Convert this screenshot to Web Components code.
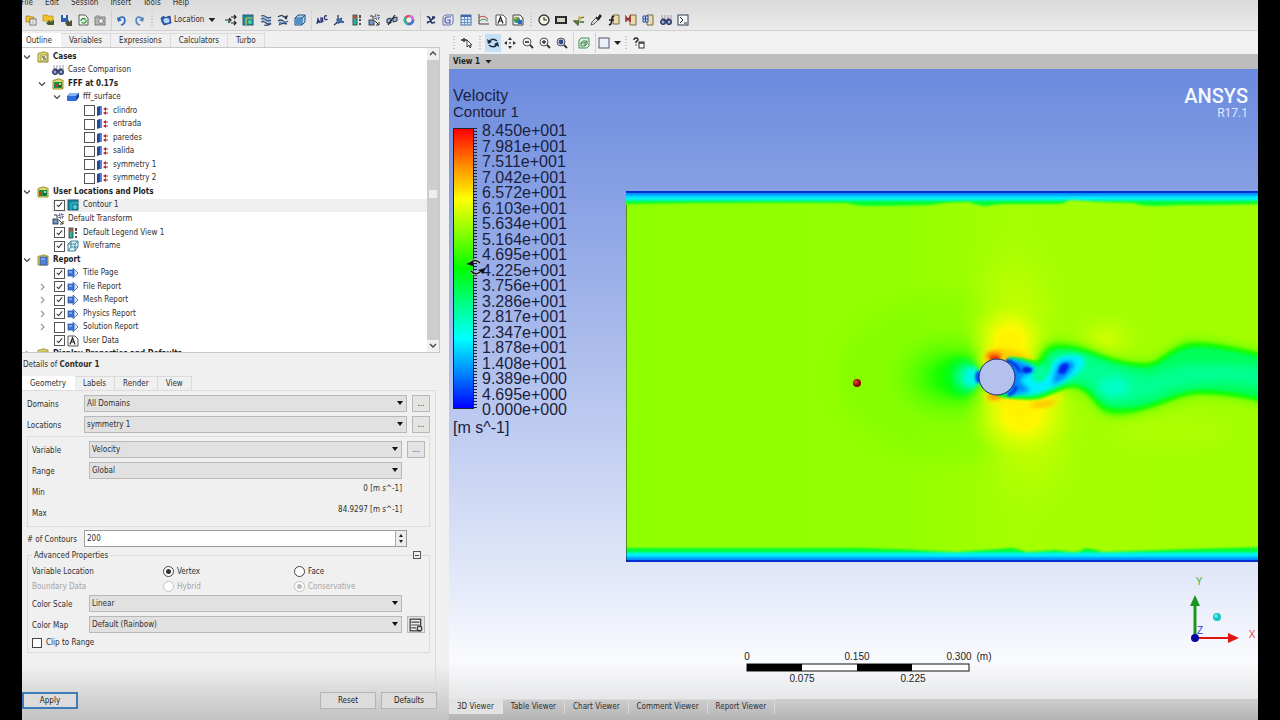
<!DOCTYPE html>
<html lang="en">
<head>
<meta charset="utf-8">
<title>CFD-Post</title>
<style>
  html, body { margin: 0; height: 100%; background: #000; }
  body {
    box-sizing: border-box; padding: 0 22px; overflow: hidden;
    font: 8px/12px "DejaVu Sans Condensed", "DejaVu Sans", sans-serif; color: #2e2e2e;
  }
</style>
</head>
<body>
<post-app></post-app>
<script>
const ICONS = {
  open: '<path d="M1 2h4l1 1h3v5H1z" fill="#f2c32c" stroke="#9a7a14" stroke-width=".7"/><rect x="5" y="5" width="6" height="6" fill="#fff" stroke="#555" stroke-width=".8"/><path d="M6.500 7h3M6.500 9h3" stroke="#777" stroke-width=".7"/>',
  openState: '<path d="M1 1h4l1 1h5v5H1z" fill="#f2c32c" stroke="#b08c18" stroke-width=".7"/><path d="M4 9l4-3v2l4-2v5H6z" fill="#4b5a2c"/>',
  save: '<rect x="1" y="1" width="7" height="7" fill="#2c5cb4"/><rect x="3" y="1" width="3" height="3" fill="#e4edf8"/><path d="M5 9l4-3v2l3-2v6H7z" fill="#4a5632"/>',
  reload: '<path d="M2 1h6l3 3v7H2z" fill="#eef6ee" stroke="#4c4c4c" stroke-width=".9"/><path d="M4 7a2.500 2.500 0 0 1 4.500-1.500M9 6a2.500 2.500 0 0 1-4.500 2" fill="none" stroke="#2e9a3a" stroke-width="1.300"/>',
  camera: '<rect x="1" y="3" width="10" height="8" fill="#b8b8b8" stroke="#6a6a6a" stroke-width=".8"/><path d="M2 2h4" stroke="#888"/><circle cx="7" cy="7" r="2.500" fill="#ececec" stroke="#666" stroke-width=".8"/>',
  undo: '<path d="M5 11c5-1 5-8 1-8-2 0-3 1-4 3" fill="none" stroke="#2f6bb8" stroke-width="1.700"/><path d="M1 3l1 5 4-2z" fill="#2f6bb8"/>',
  redo: '<path d="M7 11c-5-1-5-8-1-8 2 0 3 1 4 3" fill="none" stroke="#4f86c4" stroke-width="1.700"/><path d="M11 3l-1 5-4-2z" fill="#4f86c4"/>',
  location: '<path d="M1 4l3-2v2l6-2 1 7-7 2-2-3z" fill="#2f62c0" stroke="#183a80" stroke-width=".8"/><ellipse cx="6.500" cy="6.500" rx="3" ry="2.500" fill="#b4d2fa"/>',
  vector: '<path d="M0 6h6M4 4l2 2-2 2M6 3h5M9 1l2 2-2 2M6 9h5M9 7l2 2-2 2" fill="none" stroke="#222" stroke-width="1.200"/><circle cx="4" cy="8" r="1.200" fill="#258068"/>',
  contour: '<rect x="1" y="1" width="10" height="10" fill="#178f9c" stroke="#265870"/><path d="M4 11V6q0-2 2-2h5" fill="none" stroke="#e9bd3a" stroke-width="1.200"/><circle cx="8" cy="8" r="2" fill="#4cd0a8"/>',
  contourItem: '<rect x="1" y="1" width="10" height="10" fill="#1788a4" stroke="#1c5878"/><path d="M4 11V6q0-2 2-2h5" fill="none" stroke="#2cb4b4" stroke-width="1.400"/><circle cx="8" cy="8" r="2" fill="#5cd0d0"/>',
  stream: '<path d="M1 2q3-1 5 1t5 0M1 5q3-1 5 1t5 0M1 8q3-1 5 1t5 0M4 11q3 1 7-1" fill="none" stroke="#34496a" stroke-width="1.300"/><path d="M2 3.500q3-1 5 1t4 0M2 6.500q3-1 5 1t4 0" fill="none" stroke="#7ba6dc"/>',
  particle: '<path d="M1 3q4-3 6 0l4-1M1 7q3-2 5 0t5 0M2 11q3-3 8-1" fill="none" stroke="#3a4e6a" stroke-width="1.400"/><path d="M2 9q3-2 8-1" fill="none" stroke="#6c9ad8"/><circle cx="9" cy="4" r="1.200" fill="#222"/><circle cx="3" cy="9" r="1.200" fill="#4e8ad8"/>',
  volume: '<path d="M1 4l3-3h7v7l-3 3H1z" fill="#a9d6f4" stroke="#1e4e82"/><path d="M1 4h7v7M8 4l3-3" fill="none" stroke="#1e4e82"/><path d="M2 5h5v5H2z" fill="#4990cc"/>',
  abc: '<path d="M1 10l1-5 2 4M1.500 8h2M5 8V4q3 0 1 2 2 1 0 2zM11 2q-3-1-2.500 2t3 1" fill="none" stroke="#2d357c" stroke-width="1.300"/>',
  coord: '<path d="M5 1v7l-4 3M5 8h6M3 9l6-5" fill="none" stroke="#263a5e" stroke-width="1.300"/><path d="M3 5l5-1 2 4-5 2z" fill="#3f6ea8"/>',
  legend: '<rect x="2" y="1" width="4" height="10" fill="#28b4a0" stroke="#333" stroke-width=".8"/><rect x="2.500" y="1.500" width="3" height="3" fill="#d84830"/><path d="M9 1v3M9 5v2M9 9v2" stroke="#333" stroke-width="1.700"/>',
  transform: '<rect x="1" y="6" width="5" height="5" fill="#6b9ad6" stroke="#222" stroke-width=".8"/><path d="M2 2h3v3M7 7l4 4M11 8v3H8" fill="none" stroke="#333"/><path d="M7 1h4v4H7z" fill="#b9cbe8" stroke="#222" stroke-dasharray="1 1"/>',
  clip: '<path d="M1 9V5l4-1v5zM7 8V4l4-1v4z" fill="#8fb2e0" stroke="#334"/><path d="M2 11L9 1" stroke="#222" stroke-width="1.300"/>',
  color: '<circle cx="6" cy="6" r="4" fill="#f2f2f2" stroke="#e04848" stroke-width="2.600"/><path d="M6 2a4 4 0 0 1 4 4" stroke="#c878e0" stroke-width="2.600" fill="none"/><path d="M10 6a4 4 0 0 1-5 3.900" stroke="#3f78e0" stroke-width="2.600" fill="none"/><path d="M5 9.900A4 4 0 0 1 3 3.200" stroke="#28b89c" stroke-width="2.600" fill="none"/>',
  variable: '<path d="M2 3q2-1 3 2l1 3q1 2 4 0M10 3L2 9M7 3h3" fill="none" stroke="#26366a" stroke-width="1.700"/>',
  expression: '<path d="M3 1h8v8l-2 2H1V3z" fill="#e9ecf8" stroke="#6670a4"/><path d="M9 3H5q-2 0-2 3t2 3h3V6H5" fill="none" stroke="#4a4ea4" stroke-width="1.200"/>',
  table: '<rect x="1" y="1" width="10" height="10" fill="#dcebfa" stroke="#4c6c9c"/><path d="M1 2h10" stroke="#3868b0" stroke-width="2"/><path d="M1 5.500h10M1 8.500h10M4.500 3v8M7.500 3v8" stroke="#6b90c4"/>',
  chart: '<path d="M2 0v10h10" fill="none" stroke="#444"/><path d="M2 4q4-4 9 1" fill="none" stroke="#c84040"/><path d="M2 8q3-5 9-1" fill="none" stroke="#3a9a50"/>',
  comment: '<path d="M1 1h7l3 3v7H1z" fill="#fdfdfd" stroke="#555"/><path d="M3 9.500L5.500 3 8 9.500M4 7h3" fill="none" stroke="#222" stroke-width="1.200"/>',
  figure: '<path d="M1 1h7l3 3v7H1z" fill="#e8f0fa" stroke="#444"/><circle cx="5" cy="6" r="3" fill="#2f9a4a"/><path d="M6 6h4v4H6z" fill="#2c68c8"/><circle cx="4" cy="4" r="1.500" fill="#d89c30"/>',
  clock: '<circle cx="6" cy="6" r="5" fill="#f6f4e4" stroke="#3a3a34" stroke-width="1.400"/><path d="M6 3v3h3" fill="none" stroke="#333" stroke-width="1.200"/>',
  film: '<rect x="0" y="2" width="12" height="8" fill="#222"/><rect x="2" y="4" width="8" height="4" fill="#cfd8c8"/><path d="M1 3h10M1 9h10" stroke="#888" stroke-dasharray="1 1" stroke-width=".6"/>',
  quick: '<path d="M1 7h5l-1 4zM5 5l6-2M7 8h4" stroke="#4c6838" fill="#74924a" stroke-width="1.300"/><path d="M6 1l3 4-4 1z" fill="#d6b030"/>',
  probe: '<path d="M1 11l1-3 4-4 2 2-4 4z" fill="#d8e2ea" stroke="#333" stroke-width=".8"/><path d="M6 3l3 3M8 4l2-3 1 1-2 3z" stroke="#222" stroke-width="1.300"/>',
  func: '<path d="M5 1h6v9H5z" fill="#e9dcae" stroke="#78684a"/><path d="M6 3Q4 1 4 5l-1 5-2 1M1 6h5" fill="none" stroke="#222" stroke-width="1.500"/>',
  macro: '<path d="M5 1h6v10H5z" fill="#e9dcae" stroke="#78684a"/><path d="M1 8V3l2 3 2-3v5" fill="none" stroke="#a02828" stroke-width="1.500"/>',
  mesh: '<path d="M5 1h6v10H5z" fill="#e9dcae" stroke="#78684a"/><path d="M1 2h5v6H1zM1 5h5M3.500 2v6" fill="#d9e2fa" stroke="#2c48a8"/>',
  compare: '<path d="M2 1v5M5 1v3M8 1v3M11 1v5" stroke="#99a" stroke-width="1"/><circle cx="3" cy="8" r="2.300" fill="#8ea6dc" stroke="#222c50" stroke-width="1.300"/><circle cx="9" cy="8" r="2.300" fill="#8ea6dc" stroke="#222c50" stroke-width="1.300"/><path d="M2 5h3v2h2V5h3" fill="none" stroke="#222c50"/>',
  command: '<rect x="1" y="1" width="10" height="10" fill="#f5f7fa" stroke="#2c3c50"/><path d="M3 3l3 3-3 3M7 9h3" fill="none" stroke="#222"/>',
  select: '<path d="M0 3h6M3 1v4" stroke="#333" stroke-width="1.500"/><path d="M6 3v7l2-2 1 3 1-1-1-2h2z" fill="#fff" stroke="#333" stroke-width=".9"/>',
  rotate: '<path d="M2 5q3-5 8-1M10 7q-3 5-8 1" fill="none" stroke="#1c2c3c" stroke-width="1.600"/><path d="M0 2l1 5 4-2zM12 10l-1-5-4 2z" fill="#1c2c3c"/>',
  pan: '<path d="M6 0l2 3H4zM6 12l2-3H4zM0 6l3-2v4zM12 6L9 4v4z" fill="#333"/><circle cx="6" cy="6" r="1" fill="#555"/>',
  zoom: '<circle cx="5" cy="5" r="4" fill="#eef2f6" stroke="#555"/><path d="M8 8l3 3" stroke="#333" stroke-width="1.800"/><path d="M3 4h4v2H3z" fill="#555"/>',
  zoomIn: '<circle cx="5" cy="5" r="4" fill="#eef2f6" stroke="#555"/><path d="M8 8l3 3" stroke="#333" stroke-width="1.800"/><path d="M3 5h4M5 3v4" stroke="#333" stroke-width="1.300"/>',
  zoomFit: '<circle cx="5" cy="5" r="4" fill="#cfdaf0" stroke="#555"/><path d="M8 8l3 3" stroke="#333" stroke-width="1.800"/><circle cx="5" cy="5" r="2.400" fill="#304a8a"/>',
  fit: '<path d="M3 1h8v8l-2 2H1V3z" fill="#e2f2e2" stroke="#3f9250"/><path d="M3 6l2-2h4v3L7 9H3zM3 6h4v3M7 6l2-2" fill="none" stroke="#347044" stroke-width=".9"/>',
  page: '<rect x="1" y="1" width="10" height="10" fill="#eaf0fa" stroke="#556"/>',
  help: '<path d="M1 3q0-2 2-2t2 2L3 5v1M3 7.500v1" fill="none" stroke="#222" stroke-width="1.400"/><rect x="6" y="5" width="5" height="6" fill="#fff" stroke="#333"/><path d="M6 6h5" stroke="#333" stroke-width="1.500"/>',
  folder: '<path d="M1 3q0-1 1-1h2l1-1h3l1 1h2v9H1z" fill="#e3d870" stroke="#96902a"/><rect x="4" y="4" width="6" height="6" fill="#f6f4c8" stroke="#88843c" stroke-width=".7"/><path d="M5 6h3M6 8h3" stroke="#333"/>',
  results: '<path d="M1 3q0-1 1-1h2l1-1h3l1 1h2v9H1z" fill="#e3d870" stroke="#96902a"/><path d="M2 4h8v6H2z" fill="#1e8a46"/><path d="M3 6h2v3H3z" fill="#cc3a28"/><path d="M7 5h2v2H7z" fill="#9ee0b0"/><path d="M6 8h3" stroke="#143e24"/>',
  report: '<path d="M1 3q0-1 1-1h2l1-1h3l1 1h2v9H1z" fill="#e3d870" stroke="#96902a"/><path d="M3 3h7v8H3z" fill="#4f80dc" stroke="#2c4c94" stroke-width=".7"/><path d="M4 5h4" stroke="#a8c4f4"/>',
  domain: '<path d="M0 5l3-3h9v4l-3 4H0z" fill="#2f6fdc"/><path d="M0 5l3-3h9L9 5z" fill="#84b4f4"/><path d="M9 5l3-3v4l-3 4z" fill="#1c4698"/>',
  boundary: '<path d="M0 2l3-1v9l-3 1z" fill="#28489c"/><path d="M3 1h2v9H3z" fill="#5c84d8"/><path d="M6 4l3-2v4zM6 8l3-2v4z" fill="#b82436"/><path d="M8 4h3M8 8h3" stroke="#b82436" stroke-width="1.200"/>',
  wire: '<path d="M1 4l3-3h7v6l-3 4H1zM1 4h7v7M8 4l3-3M4 1v6h7M4 7l-3 4" fill="#e3f4f8" stroke="#2a7890" stroke-width=".9"/>',
  section: '<path d="M6 1l5 5-5 5z" fill="#dcecff" stroke="#5484c8"/><rect x="1" y="3" width="6" height="6" fill="#3c74d4" stroke="#2c509c" stroke-width=".7"/><path d="M2 5h3" stroke="#b6d0fa"/>',
  palette: '<rect x="1" y="1" width="9" height="10" fill="#eee" stroke="#333"/><path d="M2 3.500h7M2 6h7M2 8.500h4" stroke="#444"/><circle cx="9" cy="9" r="2" fill="#ddd" stroke="#333"/>'
};
const icon = (name, size = 12) =>
  `<svg class="icon" width="${size}" height="${size}" viewBox="0 0 12 12" aria-hidden="true">${ICONS[name]}</svg>`;

const define = (tag, render) => customElements.define(tag, class extends HTMLElement {
  constructor() { super(); this.attachShadow({ mode: 'open' }); }
  connectedCallback() { this.shadowRoot.innerHTML = render(this); }
});
const attr = (el, name, fallback = '') => el.getAttribute(name) ?? fallback;

define('menu-bar', () => `
  <style>
    :host { display: block; height: 10px; overflow: hidden; }
    nav { display: flex; gap: 12px; margin: -3px 0 0 -1px; }
    a { color: inherit; text-decoration: none; }
  </style>
  <nav>${['File', 'Edit', 'Session', 'Insert', 'Tools', 'Help'].map(t => `<a href="#">${t}</a>`).join('')}</nav>`);

define('tool-group', el => `
  <style>
    :host { display: flex; justify-content: space-between; align-items: center; flex: none; }
    button { all: unset; display: flex; align-items: center; justify-content: center; width: 16px; height: 18px; }
    button.on { background: #c5dff5; }
  </style>
  ${attr(el, 'icons').split(' ').map(n =>
    `<button type="button" aria-label="${n}" class="${n === attr(el, 'active') ? 'on' : ''}">${icon(n)}</button>`).join('')}`);

define('tool-menu', el => `
  <style>
    :host { display: block; flex: none; }
    button { all: unset; display: flex; align-items: center; gap: 2px; height: 18px; }
    i { width: 7px; height: 4px; margin-left: 2px; background: #222; clip-path: polygon(0 0, 100% 0, 50% 100%); }
  </style>
  <button type="button" aria-haspopup="menu" aria-label="${attr(el, 'icon')}">${icon(attr(el, 'icon'))}<slot></slot><i></i></button>`);

define('tool-rule', () => `
  <style>
    :host { display: flex; flex: none; justify-content: center; align-self: stretch; width: 6px; }
    i { width: 1px; background: #d2d2d2; }
    :host([grip]) { width: 10px; }
    :host([grip]) i { width: 2px; margin: 3px 0; background: repeating-linear-gradient(#c4c4c4 0 1px, transparent 1px 3px); }
  </style><i></i>`);

define('main-toolbar', () => `
  <style>
    :host { display: flex; align-items: center; height: 20px; padding-left: 1px; border-bottom: 1px solid #d0d0d0; }
    .five { width: 85px; } .two { width: 33px; } .six { width: 103px; } .nine { width: 155px; }
    tool-menu { width: 61px; padding-left: 3px; box-sizing: border-box; }
    .gap { margin-left: 5px; }
  </style>
  <tool-group class="five" icons="open openState save reload camera"></tool-group><tool-rule></tool-rule>
  <tool-group class="two" icons="undo redo"></tool-group><tool-rule grip></tool-rule>
  <tool-menu icon="location">Location</tool-menu>
  <tool-group class="five gap" icons="vector contour stream particle volume"></tool-group><tool-rule></tool-rule>
  <tool-group class="six" icons="abc coord legend transform clip color"></tool-group><tool-rule></tool-rule>
  <tool-group class="six" icons="variable expression table chart comment figure"></tool-group><tool-rule grip></tool-rule>
  <tool-group class="nine" icons="clock film quick probe func macro mesh compare command"></tool-group>`);

define('tab-strip', el => `
  <style>
    :host { display: flex; height: 14px; flex: none; }
    button {
      all: unset; box-sizing: border-box; padding: 0 8px; border: 1px solid #dadada; border-left: 0; border-bottom: 0;
      display: flex; align-items: center;
    }
    button.on { background: var(--tab-on, #fff); border-color: var(--tab-on, #fff); }
    :host([flush]) button.on { padding: 0 8px 0 4px; }
  </style>
  ${attr(el, 'tabs').split('|').map((t, i) =>
    `<button type="button" role="tab" aria-selected="${!i}" class="${i ? '' : 'on'}">${t}</button>`).join('')}`);

define('tree-row', el => {
  const check = attr(el, 'check'), twist = attr(el, 'twist');
  return `
  <style>
    :host { display: flex; align-items: center; min-width: 0; padding-left: calc(15px * var(--level)); white-space: nowrap; --level: ${attr(el, 'level', 0)}; }
    :host([selected]) label { background: #efefef; }
    :host([strong]) { font-weight: bold; color: #1c1c1c; }
    .twist { width: 15px; flex: none; display: flex; }
    .twist svg { margin-left: 1px; }
    label { display: flex; align-items: center; align-self: stretch; flex: 1; gap: 4px; }
    .icon { flex: none; }
    input {
      appearance: none; box-sizing: border-box; width: 11px; height: 11px; margin: 0 -2px 0 2px; flex: none;
      border: 1px solid #555; background: #fff; display: grid; place-items: center;
    }
    input:checked::after { content: ""; width: 2px; height: 5px; border: solid #333; border-width: 0 1px 1px 0; rotate: 40deg; margin-bottom: 2px; }
  </style>
  <span class="twist">${twist ? `<svg width="8" height="8" viewBox="0 0 8 8"><path d="${twist === 'open' ? 'M1 2.500l3 3 3-3' : 'M3 1l3 3-3 3'}" fill="none" stroke="${twist === 'open' ? '#444' : '#999'}" stroke-width="1.200"/></svg>` : ''}</span>
  <label>${check ? `<input type="checkbox" ${check === 'on' ? 'checked' : ''}>` : ''}${icon(attr(el, 'icon'), 12)}<slot></slot></label>`;
});

define('outline-tree', () => {
  const rows = [
    [0, 'folder', 'Cases', 'open strong'], [1, 'compare', 'Case Comparison'], [1, 'results', 'FFF at 0.17s', 'open strong'],
    [2, 'domain', 'fff_surface', 'open'],
    ...['clindro', 'entrada', 'paredes', 'salida', 'symmetry 1', 'symmetry 2'].map(n => [3, 'boundary', n, 'off']),
    [0, 'results', 'User Locations and Plots', 'open strong'], [1, 'contourItem', 'Contour 1', 'on selected'],
    [1, 'transform', 'Default Transform'], [1, 'legend', 'Default Legend View 1', 'on'], [1, 'wire', 'Wireframe', 'on'],
    [0, 'report', 'Report', 'open strong'], [1, 'section', 'Title Page', 'on'], [1, 'section', 'File Report', 'on closed'],
    [1, 'section', 'Mesh Report', 'on closed'], [1, 'section', 'Physics Report', 'on closed'],
    [1, 'section', 'Solution Report', 'off closed'], [1, 'comment', 'User Data', 'on'],
    [0, 'folder', 'Display Properties and Defaults', 'closed strong']
  ];
  return `
  <style>
    :host { display: flex; box-sizing: border-box; height: 306px; background: #fff; border: 1px solid #c8c8c8; border-left: 0; overflow: hidden; }
    .rows { flex: 1; display: grid; grid-auto-rows: 1fr; height: 311px; margin-top: 2px; }
    .bar { width: 12px; background: #cdcdcd; display: flex; flex-direction: column; justify-content: space-between; }
    .bar span { height: 12px; display: grid; place-items: center; background: #f0f0f0; }
    .bar b { flex: 1; display: flex; align-items: center; }
    .bar b::after { content: ""; flex: 1; height: 8px; margin: 0 2px 12px; background: #efefef; }
  </style>
  <div class="rows">${rows.map(([level, ic, text, flags = '']) => {
    const f = flags.split(' '), has = n => f.includes(n);
    return `<tree-row level="${level}" icon="${ic}" ${has('on') ? 'check="on"' : has('off') ? 'check="off"' : ''}
      ${has('open') ? 'twist="open"' : has('closed') ? 'twist="closed"' : ''} ${has('strong') ? 'strong' : ''} ${has('selected') ? 'selected' : ''}>${text}</tree-row>`;
  }).join('')}</div>
  <div class="bar"><span><svg width="8" height="8"><path d="M1 5l3-3 3 3" fill="none" stroke="#444" stroke-width="1.300"/></svg></span><b></b>
  <span><svg width="8" height="8"><path d="M1 2l3 3 3-3" fill="none" stroke="#444" stroke-width="1.300"/></svg></span></div>`;
});

define('form-row', el => {
  const label = attr(el, 'label'), value = attr(el, 'value'), kind = attr(el, 'kind', 'select'), extra = attr(el, 'extra');
  const field = kind === 'select'
    ? `<span class="box"><select id="f"><option>${value}</option></select><i></i></span>`
    : kind === 'number'
      ? `<span class="box"><input id="f" type="text" inputmode="numeric" value="${value}"><span class="spin"><u></u><u></u></span></span>`
      : `<output id="f">${value}</output>`;
  return `
  <style>
    :host { display: flex; align-items: center; height: 17px; }
    label { width: 57px; flex: none; white-space: nowrap; margin-top: 2px; }
    .box { position: relative; flex: 1; display: flex; height: 17px; }
    select, input {
      appearance: none; box-sizing: border-box; width: 100%; margin: 0; padding: 0 2px; height: 17px;
      border: 1px solid #b8b8b8; border-radius: 0; background: #e1e1e1; font: inherit; color: inherit;
    }
    input { background: #fff; border-color: #9c9c9c; }
    i { position: absolute; right: 4px; top: 6px; width: 6px; height: 4px; background: #111; clip-path: polygon(0 0, 100% 0, 50% 100%); pointer-events: none; }
    .spin { position: absolute; right: 1px; top: 1px; bottom: 1px; width: 10px; background: #ececec; border-left: 1px solid #aaa; display: flex; flex-direction: column; justify-content: center; align-items: center; gap: 3px; }
    u { width: 4px; height: 3px; background: #222; clip-path: polygon(50% 0, 100% 100%, 0 100%); }
    u + u { rotate: 180deg; }
    output { flex: 1; text-align: right; margin-top: -6px; }
    .extra { width: 18px; height: 17px; margin-left: 5px; flex: none; }
    button { all: unset; box-sizing: border-box; border: 1px solid #b8b8b8; background: #e4e4e4; display: grid; place-items: center; }
  </style>
  <label for="f">${label}</label>${field}
  ${extra ? `<button type="button" class="extra" aria-label="${label} options">${extra === 'dots' ? '...' : icon(extra, 14)}</button>` : '<span class="extra"></span>'}`;
});

define('radio-row', el => {
  const off = el.hasAttribute('disabled') ? 'disabled' : '', picked = +attr(el, 'picked');
  return `
  <style>
    :host { display: block; }
    fieldset { all: unset; display: grid; grid-template-columns: 131px 131px 1fr; align-items: center; height: 15px; }
    fieldset:disabled { color: #a6a6a6; }
    label { display: flex; align-items: center; gap: 3px; }
    input { appearance: none; box-sizing: border-box; width: 11px; height: 11px; margin: 0; border: 1px solid #444; border-radius: 50%; background: #fff; display: grid; place-items: center; }
    input:checked::after { content: ""; width: 5px; height: 5px; border-radius: 50%; background: #333; }
    input:disabled { border-color: #c4c4c4; } input:disabled::after { background: #bbb; }
  </style>
  <fieldset ${off} aria-label="${attr(el, 'label')}"><span>${attr(el, 'label')}</span>
  ${attr(el, 'options').split('|').map((o, i) => `<label><input type="radio" name="r" ${i === picked ? 'checked' : ''}>${o}</label>`).join('')}</fieldset>`;
});

define('push-button', () => `
  <style>
    :host { display: block; width: 56px; }
    button { all: unset; box-sizing: border-box; width: 100%; height: 17px; border: 1px solid #b4b4b4; background: #dcdcdc; text-align: center; color: #222; }
    :host([primary]) button { border: 2px solid #3d7cb8; line-height: 13px; }
  </style><button type="button"><slot></slot></button>`);

define('details-panel', () => `
  <style>
    :host { display: flex; flex-direction: column; flex: 1; }
    h2 { font: inherit; margin: 6px 0 5px 1px; }
    .page { box-sizing: border-box; margin-right: 4px; padding: 4px 5px 0; height: 297px; border: 1px solid #dcdcdc; border-left: 0; display: flex; flex-direction: column; }
    .stack { display: grid; gap: 4px; align-content: start; }
    .group { box-sizing: border-box; border: 1px solid #dcdcdc; padding: 4px 4px 0; margin: 3px 0 3px; height: 91px; }
    .advanced { margin: 8px 0 0; height: 98px; padding-top: 8px; position: relative; }
    .caption { position: absolute; left: 4px; top: -6px; padding: 0 2px; background: #f0f0f0; }
    .collapse { all: unset; box-sizing: border-box; position: absolute; right: 8px; top: -5px; width: 8px; height: 8px; border: 1px solid #555; background: linear-gradient(#444, #444) center / 4px 1px no-repeat #f0f0f0; }
    .advanced .stack { margin-top: 1px; }
    .clip { display: flex; align-items: center; gap: 4px; margin-top: 4px; }
    .clip input { appearance: none; box-sizing: border-box; width: 10px; height: 10px; margin: 0; border: 1px solid #444; background: #fff; }
    footer { display: flex; gap: 5px; margin: 5px 3px 0 0; }
    footer push-button:first-child { margin-right: auto; }
  </style>
  <h2>Details of <b>Contour 1</b></h2>
  <tab-strip tabs="Geometry|Labels|Render|View"></tab-strip>
  <div class="page">
    <div class="stack">
      <form-row label="Domains" value="All Domains" extra="dots"></form-row>
      <form-row label="Locations" value="symmetry 1" extra="dots"></form-row>
    </div>
    <div class="group stack">
      <form-row label="Variable" value="Velocity" extra="dots"></form-row>
      <form-row label="Range" value="Global"></form-row>
      <form-row label="Min" kind="text" value="0 [m s^-1]"></form-row>
      <form-row label="Max" kind="text" value="84.9297 [m s^-1]"></form-row>
    </div>
    <form-row label="# of Contours" kind="number" value="200"></form-row>
    <div class="group advanced">
      <span class="caption">Advanced Properties</span><button class="collapse" type="button" aria-label="Collapse"></button>
      <radio-row label="Variable Location" options="Vertex|Face" picked="0"></radio-row>
      <radio-row label="Boundary Data" options="Hybrid|Conservative" picked="1" disabled></radio-row>
      <div class="stack">
        <form-row label="Color Scale" value="Linear"></form-row>
        <form-row label="Color Map" value="Default (Rainbow)" extra="palette"></form-row>
      </div>
      <label class="clip"><input type="checkbox">Clip to Range</label>
    </div>
  </div>
  <footer><push-button primary>Apply</push-button><push-button>Reset</push-button><push-button>Defaults</push-button></footer>`);

define('color-legend', () => {
  const labels = ['8.450e+001', '7.981e+001', '7.511e+001', '7.042e+001', '6.572e+001', '6.103e+001', '5.634e+001', '5.164e+001', '4.695e+001',
    '4.225e+001', '3.756e+001', '3.286e+001', '2.817e+001', '2.347e+001', '1.878e+001', '1.408e+001', '9.389e+000', '4.695e+000', '0.000e+000'];
  return `
  <style>
    :host { display: block; padding: 19px 0 0 4px; font: 16px/16px "Liberation Sans", Arial, sans-serif; color: #1a2140; }
    small { display: block; font-size: 15px; line-height: 15px; }
    .scale { position: relative; display: flex; height: 294px; margin: 4px 0 3px; }
    .bar { box-sizing: border-box; width: 21px; margin: 5px 0 8px; border: 1px solid #223; background: linear-gradient(#f00, #ff8000 12%, #ff0 25%, #80ff00 38%, #0f0 50%, #00ff80 62%, #0ff 75%, #0080ff 88%, #00f); }
    .ticks { width: 3px; margin: 5px 5px 8px 0; background: repeating-linear-gradient(#223 0 1px, transparent 1px 3px); }
    ol { margin: 0; padding: 0; list-style: none; display: flex; flex-direction: column; justify-content: space-between; }
    li { line-height: 15px; }
    .cursor { position: absolute; left: 13px; top: 136px; }
  </style>
  Velocity<small>Contour 1</small>
  <div class="scale"><div class="bar"></div><div class="ticks"></div><ol>${labels.map(t => `<li>${t}</li>`).join('')}</ol>
    <svg class="cursor" width="20" height="18" viewBox="0 0 20 18"><path d="M4 4q5-5 10 0M5 12q4 5 9 1" fill="none" stroke="#ccc" stroke-width="3"/><path d="M4 4q5-5 10 0M5 12q4 5 9 1" fill="none" stroke="#111" stroke-width="1.500"/><path d="M0 5l7-3v5zM19 9l-7 2 5 4z" fill="#111"/></svg>
  </div>
  [m s^-1]`;
});

define('flow-field', () => `
  <style>:host { display: block; min-width: 0; } svg { display: block; width: 100%; height: 371px; }</style>
  <svg viewBox="0 0 632 371" preserveAspectRatio="xMinYMid slice" role="img" aria-label="Velocity contour around a cylinder">
    <defs>
      <linearGradient id="base"><stop offset="0" stop-color="#90ff00"/><stop offset=".45" stop-color="#94ff00"/><stop offset=".6" stop-color="#a4ff00"/><stop offset="1" stop-color="#a2ff00"/></linearGradient>
      <radialGradient id="front"><stop offset="0" stop-color="#08ff00"/><stop offset=".25" stop-color="#18ff00" stop-opacity=".9"/><stop offset=".6" stop-color="#50ff00" stop-opacity=".5"/><stop offset="1" stop-color="#80ff00" stop-opacity="0"/></radialGradient>
      <radialGradient id="hot"><stop offset="0" stop-color="#fff000"/><stop offset=".3" stop-color="#fff800"/><stop offset=".6" stop-color="#d8ff00" stop-opacity=".7"/><stop offset="1" stop-color="#b0ff00" stop-opacity="0"/></radialGradient>
      <radialGradient id="warm"><stop offset="0" stop-color="#d0ff00"/><stop offset=".5" stop-color="#c0ff00" stop-opacity=".6"/><stop offset="1" stop-color="#a8ff00" stop-opacity="0"/></radialGradient>
      <radialGradient id="ball" cx=".35" cy=".35"><stop offset="0" stop-color="#f04030"/><stop offset="1" stop-color="#8c0400"/></radialGradient>
      <filter id="b1" x="-50%" y="-50%" width="200%" height="200%"><feGaussianBlur stdDeviation="1"/></filter>
      <filter id="b2" x="-50%" y="-50%" width="200%" height="200%"><feGaussianBlur stdDeviation="2"/></filter>
      <filter id="b4" x="-50%" y="-50%" width="200%" height="200%"><feGaussianBlur stdDeviation="4"/></filter>
      <filter id="b8" x="-50%" y="-50%" width="200%" height="200%"><feGaussianBlur stdDeviation="8"/></filter>
      <path id="wake" d="M385 168C398 167 408 174 413 172C420 168 421 157 433 157C449 157 461 161 474 166C492 173 505 175 521 175C535 174 541 161 561 156C580 152 606 159 640 166V209C612 203 600 201 574 200C554 201 541 209 521 215C505 219 489 221 478 216C467 207 462 196 450 194C437 194 430 201 412 206C400 208 390 206 374 204Z"/>
      <path id="halo" d="M413 172C420 160 421 155 433 155C449 155 461 161 474 166C492 173 505 175 521 175C535 174 541 161 561 154C580 152 606 157 640 166V209C612 203 600 201 574 200C554 201 541 209 521 215C505 221 489 223 478 218C467 207 462 196 450 194Z"/>
    </defs>
    <rect width="632" height="371" fill="url(#base)"/>
    <ellipse cx="330" cy="186" rx="120" ry="85" fill="#7cff00" opacity=".5" filter="url(#b8)"/>
    <ellipse cx="388" cy="140" rx="60" ry="110" fill="url(#warm)"/>
    <ellipse cx="404" cy="230" rx="62" ry="110" fill="url(#warm)"/>
    <ellipse cx="326" cy="186" rx="76" ry="56" fill="url(#front)"/>
    <ellipse cx="334" cy="186" rx="17" ry="20" fill="#04ff10" filter="url(#b4)"/>
    <ellipse cx="341" cy="186" rx="13" ry="14" fill="#00ff98" filter="url(#b4)"/>
    <ellipse cx="346" cy="186" rx="8" ry="10" fill="#00f8e0" filter="url(#b2)"/>
    <ellipse cx="384" cy="150" rx="44" ry="44" fill="url(#hot)"/>
    <ellipse cx="396" cy="222" rx="58" ry="52" fill="url(#hot)"/>
    <path d="M352 174L362 158Q376 150 392 156L416 168L400 172H380ZM353 199L364 212Q390 222 430 212L440 204L400 210L374 203Z" fill="#fff000" filter="url(#b4)"/>
    <ellipse cx="480" cy="148" rx="40" ry="32" fill="url(#warm)"/>
    <ellipse cx="545" cy="240" rx="60" ry="14" fill="#aeff00" filter="url(#b8)"/>
    <path d="M357 173L364 161Q372 155 390 160L408 168H376Z" fill="#ffd000" filter="url(#b2)"/>
    <ellipse cx="368" cy="165" rx="8" ry="4" fill="#ff7000" filter="url(#b2)"/>
    <ellipse cx="369" cy="167" rx="5" ry="2" fill="#e83000" filter="url(#b1)"/>
    <ellipse cx="368" cy="206" rx="7" ry="3" fill="#ff9000" filter="url(#b2)"/>
    <ellipse cx="417" cy="213" rx="13" ry="3" fill="#ffc400" transform="rotate(-8 417 213)" filter="url(#b2)"/>
    <use href="#halo" fill="#70ff00" stroke="#70ff00" stroke-width="16" opacity=".6" filter="url(#b4)"/>
    <use href="#halo" fill="#30ff00" stroke="#30ff00" stroke-width="6" filter="url(#b2)"/>
    <use href="#wake" fill="#00ff58" stroke="#08ff08" stroke-width="4" filter="url(#b1)"/>
    <path d="M425 168Q445 160 470 172Q500 184 525 187Q555 168 640 180V194Q570 182 525 204Q495 214 480 205Q462 184 440 188Z" fill="#00ff90" stroke="#00ff90" stroke-width="6" filter="url(#b4)"/>
    <ellipse cx="488" cy="196" rx="16" ry="10" fill="#00ffc8" filter="url(#b4)"/>
    <path d="M383 168Q404 170 412 179Q404 183 410 190Q421 190 425 173Q433 161 456 165Q463 173 450 184Q430 198 408 204Q392 205 380 204Z" fill="#00f0ff" filter="url(#b2)"/>
    <ellipse cx="415" cy="182" rx="5" ry="9" fill="#00ffa0" transform="rotate(25 415 182)" filter="url(#b2)"/>
    <path d="M382 168Q399 170 409 179Q400 184 394 188Q396 195 405 199Q394 204 380 204Z" fill="#0088ff" filter="url(#b2)"/>
    <path d="M427 191Q430 173 438 170Q449 169 448 175Q441 189 427 193Z" fill="#0088ff" filter="url(#b2)"/>
    <path d="M432 182Q433 172 440 172Q446 174 438 183Z" fill="#0028f0" filter="url(#b1)"/>
    <ellipse cx="401" cy="179" rx="5" ry="3" fill="#0020e0" filter="url(#b1)"/>
    <path d="M380 169Q390 172 394 181M390 195Q389 202 382 204" fill="none" stroke="#0030e0" stroke-width="3" filter="url(#b1)"/>
    <ellipse cx="352" cy="186" rx="3" ry="6" fill="#0050ff" filter="url(#b1)"/>
    <circle cx="371" cy="186" r="18" fill="#b4c1ee" stroke="#1c2470"/>
    <g filter="url(#b1)">
      <path d="M-4 -4H640V13Q580 14 555 14L530 15Q516 15 507 12L473 11L444 9Q438 13 430 13H382Q368 13 362 15Q352 15 343 11Q320 11 304 14L246 15Q230 15 221 12Q100 11 -4 13Z" fill="#00ff30"/>
      <path d="M-4 376H640V356L564 358L477 361Q468 358 460 357Q453 361 447 361L429 359L401 361Q392 358 386 357L330 361Q280 358 234 357H-4Z" fill="#00ff30"/>
      <path d="M-4 -4H640V9H-4ZM-4 362H640V376H-4Z" fill="#00f0ff"/>
      <path d="M-4 -4H640V5H-4ZM-4 366H640V376H-4Z" fill="#0090ff"/>
    </g>
    <path d="M0 1H640M0 370H640" stroke="#0030d0" stroke-width="2"/>
    <path d="M0 14V371" stroke="#222"/>
    <circle cx="231" cy="192" r="4" fill="url(#ball)"/>
  </svg>`);

define('scale-ruler', () => `
  <style>:host { display: block; } svg { display: block; } text { font: 10px "Liberation Sans", Arial, sans-serif; fill: #222; text-anchor: middle; }</style>
  <svg width="256" height="40" viewBox="0 0 256 40">
    <text x="7" y="11">0</text><text x="117" y="11">0.150</text><text x="219" y="11">0.300</text><text x="244" y="11">(m)</text>
    <rect x="7" y="15" width="222" height="7" fill="#fff" stroke="#111"/><path d="M7 15h55v7H7zM117 15h55v7h-55z" fill="#000"/>
    <text x="62" y="33">0.075</text><text x="173" y="33">0.225</text>
  </svg>`);

define('axis-triad', () => `
  <style>:host { display: block; } svg { display: block; } text { font: 10px "Liberation Sans", Arial, sans-serif; text-anchor: middle; }</style>
  <svg width="73" height="78" viewBox="0 0 73 78">
    <text x="14" y="15" fill="#4aae4e">Y</text><text x="67" y="68" fill="#ea4a4a">X</text><text x="15" y="64" fill="#3a3ad0">Z</text>
    <path d="M10 68V32" stroke="#1a961e" stroke-width="3"/><path d="M10 25l5 11H5z" fill="#1a961e"/>
    <path d="M10 68h34" stroke="#e01414" stroke-width="2"/><path d="M54 68l-11-5v10z" fill="#e01414"/>
    <circle cx="10" cy="68" r="4" fill="#0808a0"/><circle cx="32" cy="47" r="4" fill="#14c4c4"/><circle cx="31" cy="46" r="2" fill="#5ce8e4"/>
  </svg>`);

define('viewport-3d', () => `
  <style>
    :host {
      display: grid; flex: 1; grid-template: "legend brand" 122px "legend field" 371px "legend foot" 1fr / 177px minmax(0, 1fr);
      background: linear-gradient(#6b8ade, #b4c3ee 50%, #e4eaf9 82%, #fafbfe 94%, #e6e6e8);
    }
    color-legend { grid-area: legend; }
    .brand { grid-area: brand; justify-self: end; padding: 17px 10px 0 0; text-align: right; color: #f4f7ff; font: 500 20px/21px Roboto, sans-serif; }
    .brand small { display: block; font-size: 12px; line-height: 12px; font-weight: 400; color: #dfe7ff; }
    flow-field { grid-area: field; }
    .foot { grid-area: foot; display: flex; justify-content: space-between; padding: 8px 0 0 114px; }
    scale-ruler { margin-top: 79px; }
  </style>
  <color-legend></color-legend>
  <div class="brand">ANSYS<small>R17.1</small></div>
  <flow-field></flow-field>
  <div class="foot"><scale-ruler></scale-ruler><axis-triad></axis-triad></div>`);

define('viewer-pane', () => `
  <style>
    :host { display: flex; flex-direction: column; flex: 1; min-width: 0; }
    .tools { display: flex; align-items: center; height: 20px; padding-bottom: 1px; background: #f1f1f1; }
    .five { width: 85px; }
    h2 { margin: 0; font: inherit; font-weight: bold; height: 15px; padding: 0 4px; display: flex; align-items: center; gap: 5px; background: #bdbdbd; color: #222; }
    h2 i { width: 7px; height: 4px; background: #222; clip-path: polygon(0 0, 100% 0, 50% 100%); }
    .tabs { height: 21px; background: linear-gradient(#cdcdcd, #b4b4b4); --tab-on: #e2e2e2; }
    tab-strip { height: 15px; }
  </style>
  <div class="tools">
    <tool-rule grip></tool-rule><tool-group icons="select"></tool-group><tool-rule grip></tool-rule>
    <tool-group class="five" icons="rotate pan zoom zoomIn zoomFit" active="rotate"></tool-group><tool-rule></tool-rule>
    <tool-group icons="fit"></tool-group><tool-rule></tool-rule><tool-menu icon="page"></tool-menu><tool-rule grip></tool-rule>
    <tool-group icons="help"></tool-group>
  </div>
  <h2>View 1 <i></i></h2>
  <viewport-3d></viewport-3d>
  <div class="tabs"><tab-strip tabs="3D Viewer|Table Viewer|Chart Viewer|Comment Viewer|Report Viewer"></tab-strip></div>`);

define('post-app', () => `
  <style>
    :host { display: flex; flex-direction: column; min-height: 100vh; overflow: hidden; background: #f0f0f0; }
    .head { background: linear-gradient(#dadada, #ebebeb); }
    main { flex: 1; display: flex; padding-top: 2px; min-width: 0; }
    aside { width: 418px; flex: none; display: flex; flex-direction: column; margin-right: 9px; }
    .outer { display: flex; flex: 1; background: linear-gradient(transparent 92%, #c2c2c2); }
  </style>
  <div class="head"><menu-bar></menu-bar><main-toolbar></main-toolbar></div>
  <div class="outer"><main>
    <aside><tab-strip flush tabs="Outline|Variables|Expressions|Calculators|Turbo"></tab-strip><outline-tree></outline-tree><details-panel></details-panel></aside>
    <viewer-pane></viewer-pane>
  </main></div>`);
</script>
</body>
</html>
